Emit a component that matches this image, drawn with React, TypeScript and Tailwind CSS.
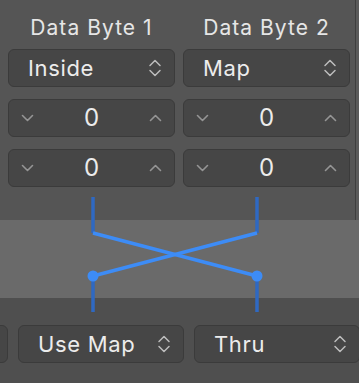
import type { ReactNode } from 'react';

function UpDown() {
  return (
    <svg width="14" height="22" viewBox="0 0 14 22" fill="none" stroke="#bdbdbd" strokeWidth="1.5" strokeLinecap="round" strokeLinejoin="round">
      <path d="M2 8.5 L7 3.5 L12 8.5" />
      <path d="M2 13.5 L7 18.5 L12 13.5" />
    </svg>
  );
}

function Chevron({ up }: { up?: boolean }) {
  return (
    <svg width="13" height="8" viewBox="0 0 13 8" fill="none" stroke="#959595" strokeWidth="1.6" strokeLinecap="round" strokeLinejoin="round">
      {up ? <path d="M1.5 6.5 L6.5 1.5 L11.5 6.5" /> : <path d="M1.5 1.5 L6.5 6.5 L11.5 1.5" />}
    </svg>
  );
}

function Select({ label, className }: { label: string; className?: string }) {
  return (
    <div className={`flex items-center justify-between h-[38px] pl-[19px] pr-[12px] rounded-[6px] bg-[#464646] border border-[#3b3b3b] ${className ?? ''}`}>
      <span className="text-[22px] leading-none tracking-[0.03em] text-[#ececec]">{label}</span>
      <UpDown />
    </div>
  );
}

function Stepper({ value }: { value: number }) {
  return (
    <div className="flex items-center justify-between h-[38px] pl-[12px] pr-[12px] rounded-[6px] bg-[#464646] border border-[#3b3b3b]">
      <Chevron />
      <span className="text-[24px] leading-none text-[#ececec]">{value}</span>
      <Chevron up />
    </div>
  );
}

function Column({ children }: { children: ReactNode }) {
  return <div className="flex flex-col w-[167px]">{children}</div>;
}

export default function App() {
  const cols = [
    { title: 'Data Byte 1', mode: 'Inside' },
    { title: 'Data Byte 2', mode: 'Map' },
  ];

  return (
    <div className="relative w-[359px] h-[383px] overflow-hidden bg-[#4f4f4f] font-['Inter',sans-serif]">
      {/* top panel */}
      <div className="flex h-[220px] bg-[#555555]">
        <div className="flex gap-[8px] pl-[8px] w-[355px]">
          {cols.map((c) => (
            <Column key={c.title}>
              <div className="h-[49px] pt-[16px] text-center text-[21px] leading-[24px] tracking-[0.05em] text-[#e6e6e6] whitespace-nowrap">{c.title}</div>
              <Select label={c.mode} />
              <div className="mt-[12px]">
                <Stepper value={0} />
              </div>
              <div className="mt-[12px]">
                <Stepper value={0} />
              </div>
            </Column>
          ))}
        </div>
        <div className="w-[1px] bg-[#3e3e3e]" />
        <div className="flex-1 bg-[#5a5a5a]" />
      </div>

      {/* mapping band */}
      <div className="h-[78px] bg-[#6a6a6a]" />

      {/* bottom selects */}
      <div className="flex gap-[10px] -ml-[158px] pt-[27px]">
        <Select label="" className="w-[166px] shrink-0" />
        <Select label="Use Map" className="w-[166px] shrink-0" />
        <Select label="Thru" className="w-[166px] shrink-0" />
      </div>

      {/* routing lines */}
      <svg className="absolute left-0 top-0" width="359" height="383" viewBox="0 0 359 383">
        <g strokeWidth="3.5" fill="none">
          <path d="M93 197 V233" stroke="#2f69c2" />
          <path d="M257 197 V233" stroke="#2f69c2" />
          <path d="M93 233 L257 276" stroke="#3d8cf6" />
          <path d="M257 233 L93 276" stroke="#3d8cf6" />
          <path d="M93 276 V312" stroke="#2f69c2" />
          <path d="M257 276 V312" stroke="#2f69c2" />
        </g>
        <circle cx="93" cy="276" r="5.5" fill="#3d8cf6" />
        <circle cx="257" cy="276" r="5.5" fill="#3d8cf6" />
      </svg>
    </div>
  );
}
